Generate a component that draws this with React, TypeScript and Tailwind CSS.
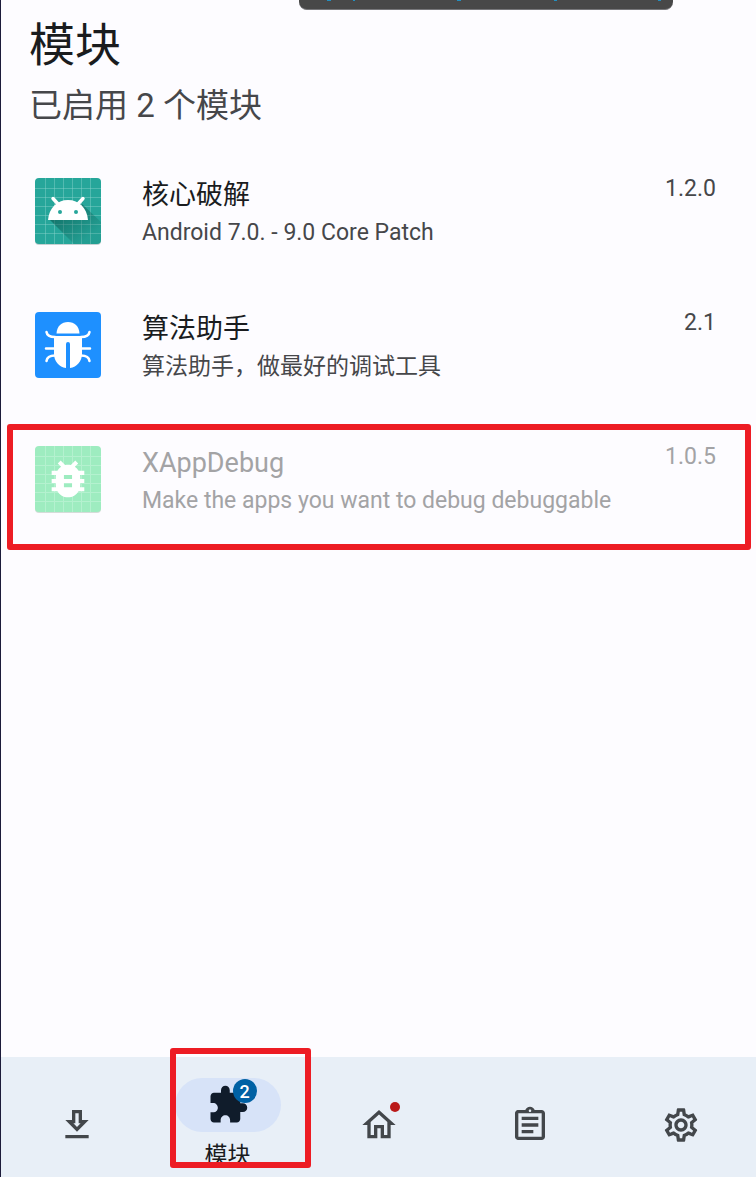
import React from "react";

function CorePatchIcon() {
  return (
    <svg viewBox="0 0 66 68" className="h-[68px] w-[66px]" aria-hidden="true">
      <defs>
        <linearGradient id="headShade" x1="0" y1="0" x2="1" y2="1">
          <stop offset="0.2" stopColor="#00443c" stopOpacity="0.5" />
          <stop offset="0.8" stopColor="#00443c" stopOpacity="0.08" />
        </linearGradient>
        <clipPath id="coreTile"><rect width="66" height="66" rx="4" /></clipPath>
      </defs>
      <rect y="1" width="66" height="66" rx="4" fill="#b9c4c5" opacity="0.8" />
      <rect width="66" height="66" rx="4" fill="#26a69a" />
      <path d="M10.500 0V66M19.500 0V66M28.500 0V66M37.500 0V66M46.500 0V66M55.500 0V66M0 10.500H66M0 19.500H66M0 28.500H66M0 37.500H66M0 46.500H66M0 55.500H66" stroke="#8fd6cf" strokeOpacity="0.42" fill="none" />
      <path clipPath="url(#coreTile)" d="M14 41L39 66H66V44L47 26Z" fill="url(#headShade)" />
      <path d="M13 42C14 30 22 22 33 22S52 30 53 42Z" fill="#fff" />
      <path d="M18 20.500l5.500 6M48 20.500l-5.500 6" stroke="#fff" strokeWidth="3.400" strokeLinecap="round" />
      <circle cx="25" cy="34" r="2" fill="#26a69a" />
      <circle cx="41" cy="34" r="2" fill="#26a69a" />
    </svg>
  );
}

function AlgorithmIcon() {
  return (
    <svg viewBox="0 0 66 68" className="h-[68px] w-[66px]" aria-hidden="true">
      <rect width="66" height="66" rx="4" fill="#1e90ff" />
      <path d="M21.500 21.500C22 14 26.500 10 33 10S44 14 44.500 21.500Z" fill="#fff" />
      <path d="M19 24H47V42C47 49 42 55 35 56V32a2 2 0 0 0-4 0V56C24 55 19 49 19 42Z" fill="#fff" />
      <path d="M11.500 20C12 23.500 15 25 20 25M54.500 20C54 23.500 51 25 46 25M11 36.500H20M46 36.500H55M11.500 49C12 45 15 43.500 20 43.500M54.500 49C54 45 51 43.500 46 43.500" stroke="#fff" strokeWidth="2.500" strokeLinecap="round" fill="none" />
    </svg>
  );
}

function DebugIcon() {
  return (
    <svg viewBox="0 0 66 68" className="h-[68px] w-[66px]" aria-hidden="true">
      <rect y="1" width="66" height="66" rx="4" fill="#d5dcd9" />
      <rect width="66" height="66" rx="4" fill="#9eecc0" />
      <path d="M10.500 0V66M19.500 0V66M28.500 0V66M37.500 0V66M46.500 0V66M55.500 0V66M0 10.500H66M0 19.500H66M0 28.500H66M0 37.500H66M0 46.500H66M0 55.500H66" stroke="#b4f1cf" fill="none" />
      <g transform="translate(8.500 8.500) scale(2.040)">
        <path fill="#fff" d="M20 8h-2.810c-.45-.78-1.070-1.450-1.820-1.960L17 4.410 15.590 3l-2.170 2.170C12.960 5.060 12.490 5 12 5s-.96.06-1.410.17L8.410 3 7 4.410l1.620 1.630C7.880 6.550 7.260 7.220 6.810 8H4v2h2.090c-.05.33-.09.66-.09 1v1H4v2h2v1c0 .34.04.67.09 1H4v2h2.810c1.040 1.790 2.970 3 5.190 3s4.150-1.210 5.190-3H20v-2h-2.090c.05-.33.09-.66.09-1v-1h2v-2h-2v-1c0-.34-.04-.67-.09-1H20V8zm-6 8h-4v-2h4v2zm0-4h-4v-2h4v2z" />
      </g>
    </svg>
  );
}

type Module = {
  name: string;
  desc: string;
  version: string;
  icon: React.ReactNode;
  disabled?: boolean;
};

const modules: Module[] = [
  { name: "核心破解", desc: "Android 7.0. - 9.0 Core Patch", version: "1.2.0", icon: <CorePatchIcon /> },
  { name: "算法助手", desc: "算法助手，做最好的调试工具", version: "2.1", icon: <AlgorithmIcon /> },
  { name: "XAppDebug", desc: "Make the apps you want to debug debuggable", version: "1.0.5", icon: <DebugIcon />, disabled: true },
];

function ModuleRow({ name, desc, version, icon, disabled }: Module) {
  return (
    <li className="relative flex h-[134px] items-start pt-[34px] pr-10 pl-[34px]">
      <div className="shrink-0">{icon}</div>
      <div className={disabled ? "ml-[41px] min-w-0 flex-1 pt-px text-[#a3a3a5]" : "ml-[41px] min-w-0 flex-1 pt-px text-[#1a1c1e]"}>
        <h2 className="text-[27px] leading-8">{name}</h2>
        <p className={disabled ? "mt-1 text-[23px] leading-9" : "mt-1 text-[23px] leading-9 text-[#46474a]"}>{desc}</p>
      </div>
      <span className={disabled ? "pt-px text-[23px] leading-5 text-[#a3a3a5]" : "pt-px text-[23px] leading-5 text-[#46474a]"}>{version}</span>
      {disabled && <div className="pointer-events-none absolute top-3 right-[5px] -bottom-1 left-1.5 rounded-[3px] border-6 border-[#ed1c24]" />}
    </li>
  );
}

const tab = "flex items-center justify-center pt-4";
const glyph = "size-10 fill-[#43474b]";

export default function App() {
  return (
    <div className="relative flex min-h-screen flex-col overflow-hidden border-l border-[#1c1b3a] bg-[#fdfcff] font-['Roboto','Noto_Sans_CJK_SC',sans-serif]">
      <div className="absolute top-0 right-[83px] left-[298px] h-2.5 rounded-b-lg border-b border-[#77777a] bg-[#484848]">
        <svg viewBox="0 0 374 2" preserveAspectRatio="none" className="h-px w-full" aria-hidden="true">
          <path d="M28 0h4v2h-4zM54 0h2v2h-2zM158 0h4v2h-4zM255 0h3v2h-3zM359 0h3v2h-3z" fill="#238fc0" />
        </svg>
      </div>
      <header className="px-7 pt-[17px]">
        <h1 className="text-[46px] leading-14 text-[#1a1c1e]">模块</h1>
        <p className="mt-[9px] text-[33px] leading-12 text-[#46474a]">已启用 2 个模块</p>
      </header>
      <main className="mt-3.5 flex-1">
        <ul>
          {modules.map((m) => (
            <ModuleRow key={m.name} {...m} />
          ))}
        </ul>
      </main>
      <nav className="grid h-30 grid-cols-5 bg-[#e8eff7]">
        <button type="button" aria-label="下载" className={tab}>
          <svg viewBox="0 0 24 24" className={glyph}>
            <path d="M19 9h-4V3H9v6H5l7 7 7-7zm-8 2V5h2v6h1.170L12 13.170 9.830 11H11zm-6 7h14v2H5z" />
          </svg>
        </button>
        <button type="button" className="relative flex flex-col items-center pt-[21px]">
          <span className="relative flex h-[54px] w-[106px] items-center justify-center rounded-full bg-[#d7e3f8]">
            <svg viewBox="0 0 24 24" className="size-[42px] fill-[#101c2b]">
              <path d="M20.500 11H19V7c0-1.100-.9-2-2-2h-4V3.500C13 2.120 11.880 1 10.500 1S8 2.120 8 3.500V5H4c-1.100 0-1.990.9-1.990 2v3.800H3.500c1.490 0 2.700 1.210 2.700 2.700s-1.210 2.700-2.700 2.700H2V20c0 1.100.9 2 2 2h3.800v-1.500c0-1.490 1.210-2.700 2.700-2.700 1.490 0 2.700 1.210 2.700 2.700V22H17c1.100 0 2-.9 2-2v-4h1.500c1.380 0 2.500-1.120 2.500-2.500S21.880 11 20.500 11z" />
            </svg>
            <span className="absolute top-px right-6 flex size-6 items-center justify-center rounded-full bg-[#0061a4] text-[18px] font-medium text-white">2</span>
          </span>
          <span className="mt-2 text-[23px] leading-8 text-[#1a1c1e]">模块</span>
          <span className="pointer-events-none absolute -top-[9px] -right-2 bottom-[9px] left-[18px] rounded-[3px] border-6 border-[#ed1c24]" />
        </button>
        <button type="button" aria-label="主页" className={tab}>
          <span className="relative">
            <svg viewBox="0 0 24 24" className={glyph}>
              <path d="M12 5.690l5 4.500V18h-2v-6H9v6H7v-7.810l5-4.500M12 3L2 12h3v8h6v-6h2v6h6v-8h3L12 3z" />
            </svg>
            <span className="absolute -top-[3px] -right-px size-2.5 rounded-full bg-[#ba1a1a]" />
          </span>
        </button>
        <button type="button" aria-label="日志" className={tab}>
          <svg viewBox="0 0 24 24" className={glyph}>
            <path d="M7 15h7v2H7zm0-4h10v2H7zm0-4h10v2H7zm12-4h-4.180C14.400 1.840 13.300 1 12 1c-1.300 0-2.400.84-2.820 2H5c-.14 0-.27.01-.4.04-.39.08-.74.28-1.010.55-.18.18-.33.4-.43.64-.1.23-.16.49-.16.77v14c0 .27.06.54.16.78s.25.45.43.64c.27.27.62.47 1.010.55.13.02.26.03.4.03h14c1.100 0 2-.9 2-2V5c0-1.100-.9-2-2-2zm-7-.25c.41 0 .75.34.75.75s-.34.75-.75.75-.75-.34-.75-.75.34-.75.75-.75zM19 19H5V5h14v14z" />
          </svg>
        </button>
        <button type="button" aria-label="设置" className={tab}>
          <svg viewBox="0 0 24 24" className={glyph}>
            <path d="M19.430 12.980c.04-.32.07-.64.07-.98s-.03-.66-.07-.98l2.110-1.650c.19-.15.24-.42.12-.64l-2-3.460c-.09-.16-.26-.25-.44-.25-.06 0-.12.01-.17.03l-2.490 1c-.52-.4-1.080-.73-1.690-.98l-.38-2.650C14.460 2.180 14.250 2 14 2h-4c-.25 0-.46.18-.49.42l-.38 2.650c-.61.25-1.170.59-1.690.98l-2.490-1c-.06-.02-.12-.03-.18-.03-.17 0-.34.09-.43.25l-2 3.460c-.13.22-.07.49.12.64l2.110 1.650c-.04.32-.07.65-.07.98s.03.66.07.98l-2.110 1.650c-.19.15-.24.42-.12.64l2 3.460c.09.16.26.25.44.25.06 0 .12-.01.17-.03l2.490-1c.52.4 1.080.73 1.690.98l.38 2.650c.03.24.24.42.49.42h4c.25 0 .46-.18.49-.42l.38-2.650c.61-.25 1.170-.59 1.690-.98l2.490 1c.06.02.12.03.18.03.17 0 .34-.09.43-.25l2-3.460c.12-.22.07-.49-.12-.64l-2.110-1.650zm-1.980-1.710c.04.31.05.52.05.73s-.02.43-.05.73l-.14 1.130.89.7 1.080.84-.7 1.210-1.270-.51-1.040-.42-.9.68c-.43.32-.84.56-1.250.73l-1.060.43-.16 1.130-.2 1.350h-1.400l-.19-1.350-.16-1.130-1.060-.43c-.43-.18-.83-.41-1.230-.71l-.91-.7-1.060.43-1.270.51-.7-1.210 1.080-.84.89-.7-.14-1.130c-.03-.31-.05-.54-.05-.74s.02-.43.05-.73l.14-1.130-.89-.7-1.080-.84.7-1.210 1.270.51 1.040.42.9-.68c.43-.32.84-.56 1.250-.73l1.060-.43.16-1.130.2-1.350h1.390l.19 1.350.16 1.130 1.060.43c.43.18.83.41 1.230.71l.91.7 1.060-.43 1.270-.51.7 1.210-1.070.85-.89.7.14 1.130zM12 8c-2.210 0-4 1.790-4 4s1.790 4 4 4 4-1.790 4-4-1.790-4-4-4zm0 6c-1.100 0-2-.9-2-2s.9-2 2-2 2 .9 2 2-.9 2-2 2z" />
          </svg>
        </button>
      </nav>
    </div>
  );
}
